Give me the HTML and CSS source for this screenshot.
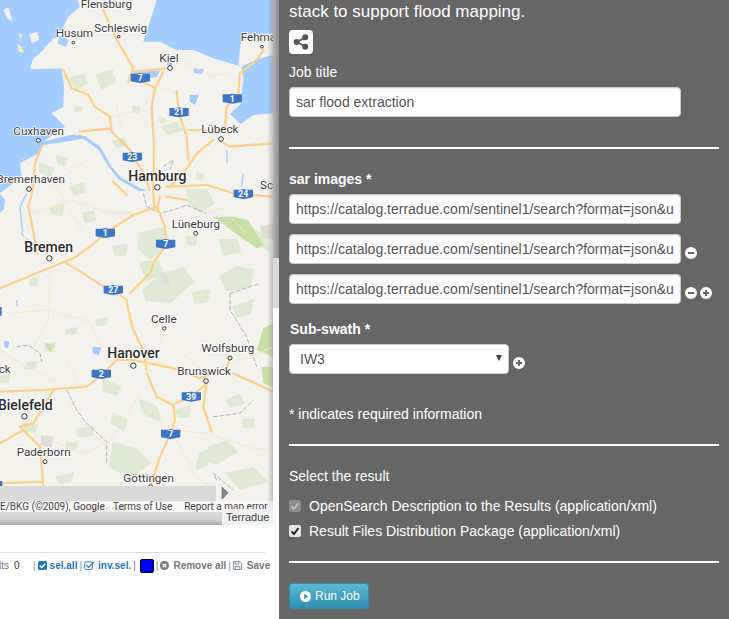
FILE: index.html
```html
<!DOCTYPE html>
<html lang="en">
<head>
<meta charset="utf-8">
<title>sar flood extraction</title>
<link rel="stylesheet" href="styles.css">
</head>
<body>
<div class="page">
  <section class="left">
    <div class="map">
      <svg class="map-svg" viewBox="0 0 819 1575" width="273" height="525" aria-label="Map of northern Germany">
        <rect class="land" width="819" height="1575"/>
        <path class="water" d="M0,0 L232,0 L240,20 L205,50 L190,80 L175,105 L205,120 L200,140 L150,125 L120,160 L100,175 L90,205 L185,205 L192,260 L190,320 L155,340 L195,380 L150,410 L130,425 L210,405 L255,408 L300,440 L335,500 L360,530 L420,565 L445,572 L415,572 L355,537 L328,503 L293,446 L250,416 L130,435 L112,462 L60,490 L65,530 L0,580 Z"/>
        <path class="water" d="M470,0 L819,0 L819,340 L760,345 L722,372 L690,342 L722,312 L730,240 L725,200 L640,175 L580,150 L530,150 L480,125 L430,125 L445,80 Z"/>
        <path class="land" d="M722,130 L730,105 L819,100 L819,165 L770,178 L725,200 L715,195 Z"/>
        <path class="land" d="M100,175 L135,165 L190,180 L190,205 L92,208 Z"/>
        <path class="land" d="M10,30 L25,22 L38,65 L22,55 Z M88,102 L112,95 L118,120 L95,128 Z M155,118 L178,108 L172,138 L152,132 Z"/>
        <path class="sand" d="M52,132 L66,140 L72,158 L56,155 Z M55,100 L66,105 L62,120 Z"/>
        <path class="water" d="M505,170 L520,172 L516,198 L500,196 Z M400,215 L480,212 L470,232 L405,238 Z M580,205 L612,208 L606,222 L582,218 Z M568,285 L596,284 L585,315 L570,305 Z M0,582 L15,600 L12,625 L0,640 Z M278,1040 L305,1042 L295,1065 L278,1060 Z M12,1022 L28,1025 L24,1045 L14,1042 Z"/>
        <path class="river" d="M80,580 L60,620 L68,700 M680,450 L682,490 M730,520 L725,560 M50,900 L52,920"/>
        <path class="green" d="M210,235 l40,-10 l10,25 l-30,15 z M290,225 l45,-15 l10,35 l-40,20 z M400,320 l18,2 l-4,16 l-12,-4 z M490,380 l40,-12 l15,22 l-45,12 z M340,425 l30,-10 l10,20 l-30,6 z M480,352 l15,5 l-5,12 l-12,-6 z M225,325 l20,-4 l-4,14 l-16,-2 z M120,490 l40,15 l-10,25 l-30,-15 z M170,470 l30,5 l-5,20 l-20,-5 z M210,560 l40,-10 l5,25 l-30,10 z M150,620 l40,-5 l-5,30 l-30,-5 z M250,640 l30,-5 l5,25 l-30,5 z M590,520 l20,5 l-5,15 l-15,-5 z M560,570 l60,0 l20,40 l-40,25 l-35,-30 z M420,700 l70,-15 l20,50 l-60,40 l-35,-30 z M340,740 l40,-5 l-5,30 l-30,0 z M560,710 l30,5 l-5,20 l-25,-5 z M660,720 l50,0 l10,35 l-50,10 z M760,690 l40,20 l10,40 l-40,-15 z M90,840 l20,-5 l-2,20 l-18,0 z M200,990 l30,-5 l-5,15 l-25,2 z M135,1035 l30,-8 l-5,28 l-20,-5 z M290,960 l30,-6 l-5,20 l-25,0 z M430,870 l60,-50 l60,-15 l30,40 l-70,60 l-70,-5 z M420,790 l50,-10 l20,40 l-50,20 z M660,830 l50,-30 l50,10 l-10,50 l-70,10 z M700,920 l60,-20 l-10,40 l-40,10 z M580,880 l50,-10 l-10,35 l-35,5 z M310,1140 l50,20 l-10,25 l-40,-15 z M420,1200 l50,20 l10,40 l-50,-20 z M340,1240 l40,20 l-10,30 l-35,-20 z M230,1290 l50,-10 l-5,25 l-40,5 z M340,1330 l70,20 l40,40 l-60,40 l-60,-30 z M530,1230 l40,-10 l-5,30 l-30,0 z M630,1340 l50,-15 l30,30 l-60,35 l-40,-10 z M680,1420 l80,-15 l40,40 l-80,20 z M600,1360 l30,-10 l-10,45 l-30,10 z M70,1270 l40,5 l-5,20 l-30,-5 z M200,1330 l30,0 l-5,20 l-25,-5 z M170,1430 l50,-10 l-10,25 l-30,5 z M680,1200 l40,-15 l10,25 l-40,10 z M730,1260 l30,0 l0,20 l-30,0 z M0,1130 l30,-5 l-5,20 l-25,0 z M80,1090 l30,-5 l-5,20 l-30,0 z"/>
        <path class="bright" d="M640,650 L700,650 L745,660 L790,735 L770,745 L700,695 Z M790,985 L819,970 L819,1070 L770,1050 Z M785,1100 L819,1100 L819,1160 L790,1150 Z M135,1030 L165,1035 L150,1055 Z"/>
        <path class="grey-area" d="M480,815 L505,825 L508,855 L485,845 Z M125,1305 L160,1310 L155,1345 L120,1335 Z M780,680 L819,670 L819,720 L790,710 Z"/>
        <path class="minor" d="M200,200 L260,280 M330,350 L420,330 L462,340 M540,180 L640,230 L690,215 M350,320 L365,390 M460,250 L530,280 M465,430 L520,380 M60,470 L150,560 L260,480 M100,640 L210,600 L330,640 L410,640 M170,560 L250,700 M560,660 L680,620 M660,620 L740,700 M30,940 L140,930 L270,965 L300,1040 M150,820 L145,960 L100,1040 M0,1050 L60,1090 L180,1150 M480,1010 L490,960 M490,1000 L470,1050 M520,1040 L620,1120 M240,1260 L320,1340 L420,1180 M130,1310 L250,1360 L320,1330 M530,1290 L620,1300 L760,1345 L819,1350 M530,1320 L590,1430 L650,1470 M200,1080 L250,1180 L190,1240 M700,1090 L819,1040"/>
        <path class="border" d="M212,408 L250,408 M430,580 L440,620 L480,640 L520,630 L560,615 L620,640 M490,500 L520,480 L510,510 M62,700 L110,740 M690,880 L690,930 L740,1010 L770,1100 M690,880 L780,850 M50,1040 L85,1035 L120,1060 L125,1085 M200,1170 L230,1230 L260,1270 L320,1325 L320,1390 M640,1250 L720,1240 L760,1200 M650,1440 L640,1420 L700,1470"/>
        <path class="road" d="M310,30 L345,110 L400,205 L385,245 M400,215 L500,205 M420,240 L465,265 L490,215 M465,265 L455,320 L462,440 L460,560 L462,620 M190,210 L215,265 L265,285 L285,320 L330,350 L335,395 L390,450 L430,520 L450,570 M335,385 L240,395 M530,275 L537,340 L560,410 L565,480 M565,390 L640,392 M640,420 L590,460 L550,520 L510,560 M663,425 L690,440 L819,430 M790,150 L770,180 L720,220 L715,280 L680,320 L675,380 M500,560 L620,555 L700,580 L819,590 M470,620 L400,645 L330,690 L270,740 L220,775 L120,815 L0,865 M200,790 L250,820 L310,860 L340,870 L380,900 L385,930 L400,990 L430,1050 L440,1110 M465,780 L450,820 L390,880 M470,620 L495,680 L497,740 L465,780 M0,1175 L130,1170 L260,1160 L310,1120 L350,1080 L400,1080 L520,1105 L600,1135 L680,1105 L690,1070 M700,1120 L819,1175 M440,1120 L470,1190 L520,1215 L525,1260 L512,1300 L480,1370 L450,1460 M525,1210 L574,1190 L620,1150 L610,1220 L635,1295 M160,1170 L100,1270 L60,1280 L120,1340 L130,1460 M0,1330 L70,1290 M125,440 L105,490 L100,560 L85,620 L105,720 L110,760 M340,545 L380,585 M0,1450 L130,1445 M500,590 L560,600 M480,590 L470,630"/>
        <g class="places">
          <circle cx="220" cy="128" r="4"/><circle cx="356" cy="110" r="4"/><circle cx="510" cy="204" r="7"/><circle cx="786" cy="140" r="4"/><circle cx="115" cy="421" r="6"/><circle cx="87" cy="567" r="7"/><circle cx="472" cy="562" r="8"/><circle cx="663" cy="417" r="7"/><circle cx="587" cy="700" r="6"/><circle cx="148" cy="775" r="8"/><circle cx="493" cy="985" r="5"/><circle cx="690" cy="1074" r="6"/><circle cx="400" cy="1097" r="8"/><circle cx="618" cy="1143" r="7"/><circle cx="73" cy="1249" r="8"/><circle cx="135" cy="1385" r="6"/><circle cx="452" cy="1460" r="6"/>
        </g>
        <g class="labels">
          <text x="242" y="24">Flensburg</text><text x="283" y="95">Schleswig</text><text x="167" y="112">Husum</text><text x="722" y="124">Fehmarn</text><text x="478" y="186">Kiel</text><text x="40" y="404">Cuxhaven</text><text class="end" x="195" y="548">Bremerhaven</text><text x="604" y="398">Lübeck</text><text x="780" y="566">Schwerin</text><text x="515" y="684">Lüneburg</text><text x="453" y="970">Celle</text><text x="604" y="1056">Wolfsburg</text><text x="532" y="1125">Brunswick</text><text class="end" x="32" y="1120">Osnabrück</text><text x="50" y="1368">Paderborn</text><text x="370" y="1447">Göttingen</text><text class="faint" x="277" y="1538">Kassel</text>
          <text class="city" x="385" y="542">Hamburg</text><text class="city" x="73" y="757">Bremen</text><text class="city" x="322" y="1073">Hanover</text><text class="city end" x="158" y="1229">Bielefeld</text>
        </g>
        <g class="shields">
          <g transform="translate(421,234)"><path d="M-29,-13 L-10,-13 L0,-15 L10,-13 L29,-13 L29,10 L0,15 L-29,10 Z"/><text y="9">7</text></g>
          <g transform="translate(697,296)"><path d="M-29,-13 L-10,-13 L0,-15 L10,-13 L29,-13 L29,10 L0,15 L-29,10 Z"/><text y="9">1</text></g>
          <g transform="translate(537,337)"><path d="M-29,-13 L-10,-13 L0,-15 L10,-13 L29,-13 L29,10 L0,15 L-29,10 Z"/><text y="9">21</text></g>
          <g transform="translate(397,471)"><path d="M-29,-13 L-10,-13 L0,-15 L10,-13 L29,-13 L29,10 L0,15 L-29,10 Z"/><text y="9">23</text></g>
          <g transform="translate(730,582)"><path d="M-29,-13 L-10,-13 L0,-15 L10,-13 L29,-13 L29,10 L0,15 L-29,10 Z"/><text y="9">24</text></g>
          <g transform="translate(316,699)"><path d="M-29,-13 L-10,-13 L0,-15 L10,-13 L29,-13 L29,10 L0,15 L-29,10 Z"/><text y="9">1</text></g>
          <g transform="translate(497,732)"><path d="M-29,-13 L-10,-13 L0,-15 L10,-13 L29,-13 L29,10 L0,15 L-29,10 Z"/><text y="9">7</text></g>
          <g transform="translate(340,870)"><path d="M-29,-13 L-10,-13 L0,-15 L10,-13 L29,-13 L29,10 L0,15 L-29,10 Z"/><text y="9">27</text></g>
          <g transform="translate(304,1122)"><path d="M-29,-13 L-10,-13 L0,-15 L10,-13 L29,-13 L29,10 L0,15 L-29,10 Z"/><text y="9">2</text></g>
          <g transform="translate(574,1190)"><path d="M-29,-13 L-10,-13 L0,-15 L10,-13 L29,-13 L29,10 L0,15 L-29,10 Z"/><text y="9">39</text></g>
          <g transform="translate(512,1302)"><path d="M-29,-13 L-10,-13 L0,-15 L10,-13 L29,-13 L29,10 L0,15 L-29,10 Z"/><text y="9">7</text></g>
          <path d="M-20,921 L5,921 L5,947 L-20,947 Z M-20,1443 L7,1443 L7,1465 L-20,1465 Z"/>
        </g>
      </svg>
      <div class="map-shade"></div>
      <div class="map-strip"></div>
      <div class="map-scroll"></div>
      <svg class="map-arrow" viewBox="0 0 8 14" width="8" height="14"><path d="M1,1 L7,7 L1,13 Z"/></svg>
      <div class="map-attr">
        <span class="attr-data">E/BKG (©2009), Google</span>
        <span class="attr-link">Terms of Use</span>
        <span class="attr-link">Report a map error</span>
      </div>
      <div class="map-credit">Terradue</div>
      <div class="map-tab"></div>
      <div class="map-handle"></div>
    </div>
    <div class="toolbar-wrap">
      <div class="toolbar">
        <span class="count-label"><span>Results</span></span>
        <span class="count">0</span>
        <span class="sep sep-a">|</span>
        <svg class="ico ico-check" viewBox="0 0 10 10" width="9" height="9"><rect width="10" height="10" rx="2"/><path d="M2,5 L4.2,7.2 L8,3"/></svg>
        <span class="tool tool-blue">sel.all</span>
        <span class="sep">|</span>
        <svg class="ico ico-check-o" viewBox="0 0 12 10" width="11" height="9"><rect x="0.6" y="1" width="8.6" height="8.4" rx="1.5"/><path d="M2.5,4.6 L4.8,7 L11,1"/></svg>
        <span class="tool tool-blue">inv.sel.</span>
        <span class="sep sep-red">|</span>
        <span class="swatch"></span>
        <span class="sep">|</span>
        <svg class="ico ico-remove" viewBox="0 0 10 10" width="9" height="9"><circle cx="5" cy="5" r="5"/><path d="M3,3 L7,7 M7,3 L3,7"/></svg>
        <span class="tool tool-grey">Remove all</span>
        <span class="sep">|</span>
        <svg class="ico ico-save" viewBox="0 0 10 10" width="9" height="9"><path d="M0.5,0.5 H7.5 L9.5,2.5 V9.5 H0.5 Z M2.5,0.5 V3.5 H6.5 V0.5 M2.5,9.5 V6 H7.5 V9.5"/></svg>
        <span class="tool tool-grey tool-save">Save</span>
      </div>
    </div>
  </section>

  <section class="right">
    <p class="intro">stack to support flood mapping.</p>
    <button class="share" type="button" aria-label="Share">
      <svg viewBox="0 0 16 16" width="16" height="16"><path class="share-line" d="M12,3.5 L4,8 L12,12.5"/><circle cx="12.2" cy="3.3" r="3"/><circle cx="3.6" cy="8" r="3"/><circle cx="12.2" cy="12.7" r="3"/></svg>
    </button>
    <label class="field-label">Job title</label>
    <input class="text-input" type="text" value="sar flood extraction">
    <hr class="rule rule-job">

    <h3 class="group-title">sar images *</h3>
    <div class="input-row">
      <input class="text-input" type="text" value="https://catalog.terradue.com/sentinel1/search?format=json&amp;uid=S1A_IW_GRDH">
    </div>
    <div class="input-row">
      <input class="text-input" type="text" value="https://catalog.terradue.com/sentinel1/search?format=json&amp;uid=S1A_IW_GRDH">
      <svg class="round-ico" viewBox="0 0 12 12" width="12" height="12"><circle cx="6" cy="6" r="6"/><path d="M3,6 H9"/></svg>
    </div>
    <div class="input-row">
      <input class="text-input" type="text" value="https://catalog.terradue.com/sentinel1/search?format=json&amp;uid=S1A_IW_GRDH">
      <svg class="round-ico" viewBox="0 0 12 12" width="12" height="12"><circle cx="6" cy="6" r="6"/><path d="M3,6 H9"/></svg>
      <svg class="round-ico" viewBox="0 0 12 12" width="12" height="12"><circle cx="6" cy="6" r="6"/><path d="M3,6 H9 M6,3 V9"/></svg>
    </div>

    <h3 class="group-title group-swath">Sub-swath *</h3>
    <div class="input-row">
      <div class="select-wrap">
        <select class="select-input"><option>IW3</option></select>
        <span class="select-arrow"></span>
      </div>
      <svg class="round-ico" viewBox="0 0 12 12" width="12" height="12"><circle cx="6" cy="6" r="6"/><path d="M3,6 H9 M6,3 V9"/></svg>
    </div>

    <p class="required-note">* indicates required information</p>
    <hr class="rule rule-note">

    <p class="select-title">Select the result</p>
    <div class="check-row">
      <span class="box box-disabled"><svg viewBox="0 0 12 12" width="12" height="12"><path d="M2.5,6.5 L5,9 L9.5,3"/></svg></span>
      <span>OpenSearch Description to the Results (application/xml)</span>
    </div>
    <div class="check-row">
      <span class="box"><svg viewBox="0 0 12 12" width="12" height="12"><path d="M2.5,6.5 L5,9 L9.5,3"/></svg></span>
      <span>Result Files Distribution Package (application/xml)</span>
    </div>
    <hr class="rule rule-result">

    <button class="run" type="button">
      <svg viewBox="0 0 12 12" width="11" height="11"><circle cx="6" cy="6" r="6"/><path d="M4.4,3 L9,6 L4.4,9 Z"/></svg>
      Run Job
    </button>
  </section>
</div>
</body>
</html>
```
FILE: styles.css
```css
* { box-sizing: border-box; }
html, body { margin: 0; padding: 0; }
body { background: #fff; font-family: "Liberation Sans", Arial, sans-serif; font-size: 14px; }
.page { display: flex; width: 729px; height: 619px; overflow: hidden; }

/* left column */
.left { width: 279px; flex: none; background: #fff; }
.map { position: relative; width: 279px; height: 525px; overflow: hidden; }
.map-svg { display: block; }
.land { fill: #f3f2ed; }
.water { fill: #a3ccff; }
.sand { fill: #f3e9b6; }
.river { fill: none; stroke: #a3ccff; stroke-width: 4; }
.green { fill: #dfe9d3; stroke: #dfe9d3; stroke-width: 6; stroke-linejoin: round; }
.bright { fill: #c9dfa8; }
.grey-area { fill: #dedcd6; }
.minor { fill: none; stroke: #f7e6c6; stroke-width: 2.5; }
.border { fill: none; stroke: #a8a8a8; stroke-width: 2.5; stroke-dasharray: 14 5; }
.road { fill: none; stroke: #fdd08a; stroke-width: 6.5; stroke-linejoin: round; stroke-linecap: round; }
.places circle { fill: #fff; stroke: #333; stroke-width: 3; }
.labels text { font-family: Roboto, sans-serif; font-size: 35px; fill: #3a3a3a; stroke: #fff; stroke-width: 5px; paint-order: stroke; stroke-linejoin: round; }
.labels .city { font-size: 42px; font-weight: 500; fill: #2b2b2b; }
.labels .end { text-anchor: end; }
.labels .faint { fill: #9a9a9a; stroke: none; font-size: 33px; }
.shields path { fill: #3b76c6; }
.shields text { font-family: Roboto, sans-serif; font-size: 26px; font-weight: 700; fill: #fff; text-anchor: middle; }

.map-shade { position: absolute; left: 267px; top: 0; width: 6px; height: 512px; background: linear-gradient(90deg, rgba(150,150,150,0), rgba(150,150,150,.55)); }
.map-strip { position: absolute; left: 0; top: 512px; width: 273px; height: 13px; background: linear-gradient(#d8d8d8, #d0d0d0 60%, #a9a9a9); }
.map-scroll { position: absolute; left: 0; top: 486px; width: 216px; height: 16px; background: #dadada; }
.map-arrow { position: absolute; left: 221px; top: 486px; }
.map-arrow path { fill: #8a8a8a; stroke: #555; stroke-width: 0.6; }
.map-attr { position: absolute; left: 0; top: 501px; width: 273px; height: 11px; display: flex; font-family: Roboto, sans-serif; font-size: 10px; line-height: 11px; color: #444; background: rgba(255,255,255,.55); white-space: nowrap; overflow: hidden; }
.attr-data { flex: none; width: 113px; }
.attr-link { flex: none; margin-right: 12px; }
.map-credit { position: absolute; right: 6px; top: 509px; width: 51px; height: 16px; background: #f1f1f1; font-size: 11px; line-height: 17px; color: #444; padding-left: 4px; }
.map-tab { position: absolute; left: 273px; top: 0; width: 6px; height: 258px; background: linear-gradient(90deg, #b4b4b4, #8d8d8d); }
.map-handle { position: absolute; left: 273px; top: 258px; width: 6px; height: 50px; background: #d9d9d9; }

.toolbar-wrap { padding-top: 27px; }
.toolbar { width: 279px; height: 27px; display: flex; align-items: center; font-size: 10px; font-weight: 700; white-space: nowrap; background: linear-gradient(90deg, #ddd 265px, #fff 265px) top / 100% 1px no-repeat; }
.count-label { width: 9px; display: flex; justify-content: flex-end; overflow: hidden; color: #777; font-weight: 400; }
.count { margin-left: 5px; width: 19px; color: #333; font-weight: 400; }
.sep { color: #6a9dbd; font-weight: 400; margin: 0 2px; }
.sep-a { margin-left: 0; }
.sep-red { color: #a5688a; margin-right: 4px; }
.ico { flex: none; }
.ico-check rect { fill: #1a7ab8; }
.ico-check path { fill: none; stroke: #fff; stroke-width: 1.6; }
.ico-check-o rect { fill: none; stroke: #1a7ab8; stroke-width: 1; }
.ico-check-o path { fill: none; stroke: #1a7ab8; stroke-width: 1.3; }
.ico-remove circle { fill: #777; }
.ico-remove path { stroke: #fff; stroke-width: 1.6; }
.ico-save path { fill: none; stroke: #777; stroke-width: 0.9; }
.tool { margin-left: 3px; }
.tool-blue { color: #1a7ab8; }
.tool-grey { color: #777; margin-left: 4px; }
.tool-save { margin-left: 5px; }
.swatch { width: 14px; height: 14px; border-radius: 2px; background: #0000ff; border: 1px solid #000; }

/* right column */
.right { flex: 1; min-width: 0; background: #666; padding: 0 10px; color: #fff; }
.intro { margin: 0; height: 30px; font-size: 17px; line-height: 24px; }
.share { display: flex; align-items: center; justify-content: center; width: 24px; height: 24px; padding: 0; border: 0; border-radius: 4px; background: #fff; }
.share circle { fill: #555; }
.share-line { fill: none; stroke: #555; stroke-width: 1.6; }
.field-label { display: block; margin-top: 10px; height: 23px; line-height: 17px; }
.text-input { display: block; width: 392px; height: 30px; padding: 0 6px; flex: none; border: 1px solid #ccc; border-radius: 4px; background: #fff; color: #555; font: 14px "Liberation Sans", Arial, sans-serif; box-shadow: inset 0 1px 1px rgba(0,0,0,.08); }
.rule { margin: 0; border: 0; height: 2px; background: #fff; }
.rule-job { margin-top: 30px; }
.group-title { margin: 22px 0 0; height: 23px; font-size: 14px; line-height: 17px; font-weight: 700; }
.input-row { display: flex; align-items: flex-end; height: 30px; margin-bottom: 10px; }
.round-ico { flex: none; margin: 0 0 5px 4px; }
.input-row .round-ico + .round-ico { margin-left: 3px; }
.round-ico circle { fill: #fff; }
.round-ico path { stroke: #666; stroke-width: 2; fill: none; }
.group-swath { margin-top: 17px; padding-left: 1px; height: 23px; }
.select-wrap { position: relative; width: 220px; height: 30px; flex: none; }
.select-input { display: block; width: 220px; height: 30px; padding: 0 10px; border: 1px solid #ccc; border-radius: 4px; background: #fff; color: #555; font: 14px "Liberation Sans", Arial, sans-serif; appearance: none; -webkit-appearance: none; }
.select-arrow { position: absolute; left: 207px; top: 11px; width: 0; height: 0; border-left: 3px solid transparent; border-right: 3px solid transparent; border-top: 6px solid #444; }
.required-note { margin: 32px 0 0; height: 17px; line-height: 17px; }
.rule-note { margin-top: 21px; }
.select-title { margin: 22px 0 0; height: 17px; line-height: 17px; }
.check-row { display: flex; align-items: center; height: 17px; margin-top: 8px; }
.select-title + .check-row { margin-top: 12px; }
.box { display: flex; width: 12px; height: 12px; margin-right: 8px; border-radius: 2px; background: #e6e6e6; }
.box svg path { fill: none; stroke: #222; stroke-width: 2; }
.box-disabled { background: #8c8c8c; }
.box-disabled svg path { stroke: #b9b9b9; }
.rule-result { margin-top: 22px; }
.run { display: flex; align-items: center; gap: 4px; margin-top: 20px; width: 80px; height: 26px; padding: 0 0 0 10px; border: 1px solid #2d8aa8; border-radius: 3px; background: linear-gradient(#5bb9d8, #2f8fb2); color: #fff; font: 12px "Liberation Sans", Arial, sans-serif; }
.run circle { fill: #fff; }
.run path { fill: #3a9ec2; }
```
